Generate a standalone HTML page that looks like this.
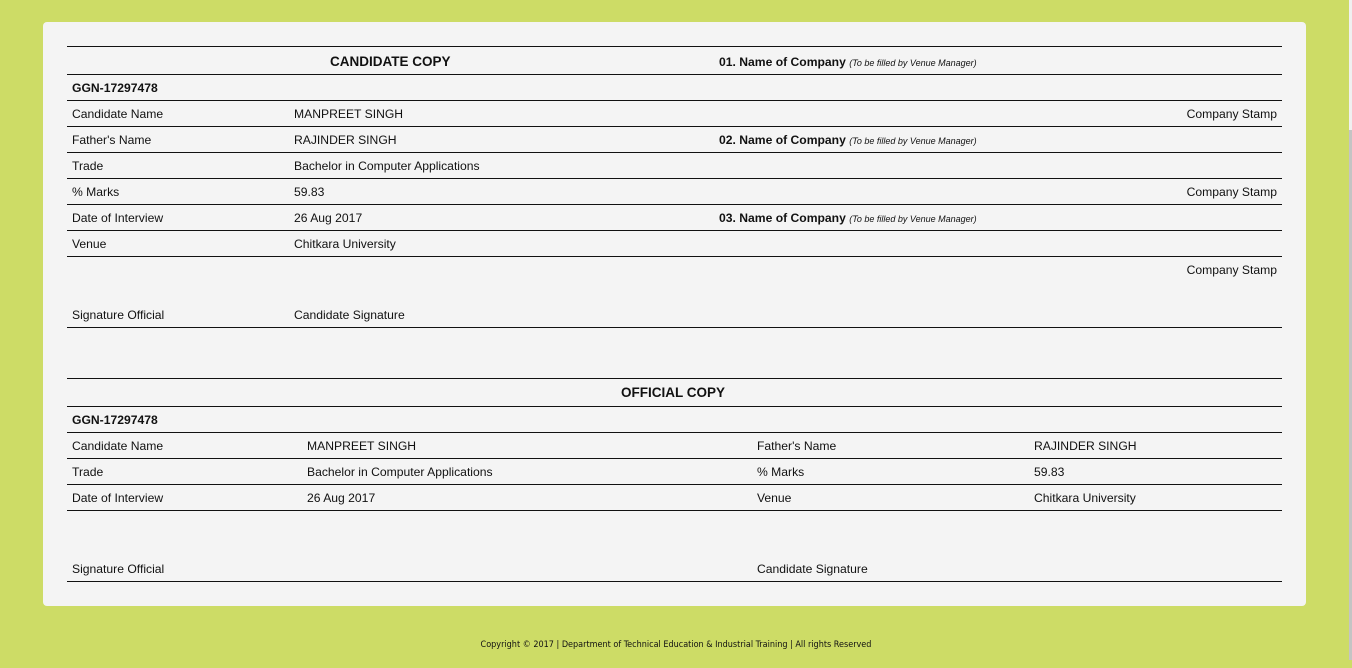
<!DOCTYPE html>
<html><head><meta charset="utf-8"><style>
html,body{margin:0;padding:0}
body{width:1352px;height:668px;background:#cddc66;position:relative;overflow:hidden;font-family:"Liberation Sans",Arial,sans-serif;font-size:12.15px;color:#111}
.card{position:absolute;left:43px;top:22px;width:1263px;height:584px;background:#f4f4f4;border-radius:4px}
.l{position:absolute;left:67px;width:1215px;height:1px;background:#111}
.t{position:absolute;line-height:14px;white-space:nowrap;margin-top:1px}
.b{font-weight:bold}
.i{font-style:italic;font-size:9px;font-weight:normal}
.r{right:75px;text-align:right}
.foot{position:absolute;left:0;width:1352px;top:639px;text-align:center;font-size:9px;font-family:"DejaVu Sans Condensed","Liberation Sans",sans-serif;color:#111;line-height:12px}
</style></head><body>
<div class="card"></div>
<div style="position:absolute;left:1349px;top:0;width:3px;height:130px;background:#f0f0f0"></div>
<div style="position:absolute;left:1349px;top:130px;width:3px;height:530px;background:#c4c4c4"></div>

<div class="l" style="top:46px"></div>
<div class="l" style="top:74px"></div>
<div class="l" style="top:100px"></div>
<div class="l" style="top:126px"></div>
<div class="l" style="top:152px"></div>
<div class="l" style="top:178px"></div>
<div class="l" style="top:204px"></div>
<div class="l" style="top:230px"></div>
<div class="l" style="top:256px"></div>
<div class="l" style="top:327px"></div>

<div class="t b" style="left:330px;top:54px;font-size:13.5px">CANDIDATE COPY</div>
<div class="t b" style="left:719px;top:54px">01. Name of Company <span class="i">(To be filled by Venue Manager)</span></div>
<div class="t b" style="left:72px;top:80px">GGN-17297478</div>
<div class="t" style="left:72px;top:106px">Candidate Name</div><div class="t" style="left:294px;top:106px">MANPREET SINGH</div>
<div class="t r" style="top:106px">Company Stamp</div>
<div class="t" style="left:72px;top:132px">Father's Name</div><div class="t" style="left:294px;top:132px">RAJINDER SINGH</div>
<div class="t b" style="left:719px;top:132px">02. Name of Company <span class="i">(To be filled by Venue Manager)</span></div>
<div class="t" style="left:72px;top:158px">Trade</div><div class="t" style="left:294px;top:158px">Bachelor in Computer Applications</div>
<div class="t" style="left:72px;top:184px">% Marks</div><div class="t" style="left:294px;top:184px">59.83</div>
<div class="t r" style="top:184px">Company Stamp</div>
<div class="t" style="left:72px;top:210px">Date of Interview</div><div class="t" style="left:294px;top:210px">26 Aug 2017</div>
<div class="t b" style="left:719px;top:210px">03. Name of Company <span class="i">(To be filled by Venue Manager)</span></div>
<div class="t" style="left:72px;top:236px">Venue</div><div class="t" style="left:294px;top:236px">Chitkara University</div>
<div class="t r" style="top:262px">Company Stamp</div>
<div class="t" style="left:72px;top:307px">Signature Official</div><div class="t" style="left:294px;top:307px">Candidate Signature</div>

<div class="l" style="top:378px"></div>
<div class="l" style="top:406px"></div>
<div class="l" style="top:432px"></div>
<div class="l" style="top:458px"></div>
<div class="l" style="top:484px"></div>
<div class="l" style="top:510px"></div>
<div class="l" style="top:581px"></div>

<div class="t b" style="left:621px;top:385px;font-size:13.5px">OFFICIAL COPY</div>
<div class="t b" style="left:72px;top:412px">GGN-17297478</div>
<div class="t" style="left:72px;top:438px">Candidate Name</div><div class="t" style="left:307px;top:438px">MANPREET SINGH</div>
<div class="t" style="left:757px;top:438px">Father's Name</div><div class="t" style="left:1034px;top:438px">RAJINDER SINGH</div>
<div class="t" style="left:72px;top:464px">Trade</div><div class="t" style="left:307px;top:464px">Bachelor in Computer Applications</div>
<div class="t" style="left:757px;top:464px">% Marks</div><div class="t" style="left:1034px;top:464px">59.83</div>
<div class="t" style="left:72px;top:490px">Date of Interview</div><div class="t" style="left:307px;top:490px">26 Aug 2017</div>
<div class="t" style="left:757px;top:490px">Venue</div><div class="t" style="left:1034px;top:490px">Chitkara University</div>
<div class="t" style="left:72px;top:561px">Signature Official</div>
<div class="t" style="left:757px;top:561px">Candidate Signature</div>

<div class="foot">Copyright © 2017 | Department of Technical Education &amp; Industrial Training | All rights Reserved</div>
</body></html>
